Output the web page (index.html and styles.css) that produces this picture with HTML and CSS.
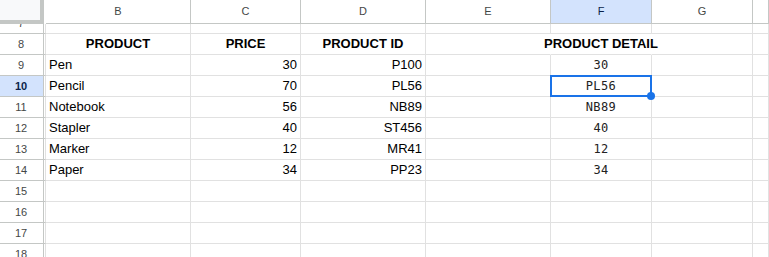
FILE: index.html
```html
<!DOCTYPE html>
<html lang="en">
<head>
  <meta charset="UTF-8" />
  <title>Products - Sheet</title>
  <link rel="stylesheet" href="styles.css">
</head>
<body>

  <div class="sheet">
    <!-- column letters -->
    <div class="row col-head">
      <div class="corner"></div>
      <div class="ch">B</div>
      <div class="ch">C</div>
      <div class="ch">D</div>
      <div class="ch">E</div>
      <div class="ch active">F</div>
      <div class="ch">G</div>
      <div class="ch"></div>
    </div>

    <div class="viewport">
      <div class="row first">
        <div class="rh">7</div>
        <div class="c"></div><div class="c"></div><div class="c"></div><div class="c"></div><div class="c"></div><div class="c"></div><div class="c"></div>
      </div>

      <div class="row">
        <div class="rh">8</div>
        <div class="c title">PRODUCT</div>
        <div class="c title">PRICE</div>
        <div class="c title">PRODUCT ID</div>
        <div class="c no-line"></div>
        <div class="c title no-line">PRODUCT DETAIL</div>
        <div class="c"></div>
        <div class="c"></div>
      </div>

      <div class="row">
        <div class="rh">9</div>
        <div class="c">Pen</div>
        <div class="c num">30</div>
        <div class="c num">P100</div>
        <div class="c"></div>
        <div class="c mono">30</div>
        <div class="c"></div>
        <div class="c"></div>
      </div>

      <div class="row">
        <div class="rh active">10</div>
        <div class="c">Pencil</div>
        <div class="c num">70</div>
        <div class="c num">PL56</div>
        <div class="c"></div>
        <div class="c mono selected">PL56</div>
        <div class="c"></div>
        <div class="c"></div>
      </div>

      <div class="row">
        <div class="rh">11</div>
        <div class="c">Notebook</div>
        <div class="c num">56</div>
        <div class="c num">NB89</div>
        <div class="c"></div>
        <div class="c mono">NB89</div>
        <div class="c"></div>
        <div class="c"></div>
      </div>

      <div class="row">
        <div class="rh">12</div>
        <div class="c">Stapler</div>
        <div class="c num">40</div>
        <div class="c num">ST456</div>
        <div class="c"></div>
        <div class="c mono">40</div>
        <div class="c"></div>
        <div class="c"></div>
      </div>

      <div class="row">
        <div class="rh">13</div>
        <div class="c">Marker</div>
        <div class="c num">12</div>
        <div class="c num">MR41</div>
        <div class="c"></div>
        <div class="c mono">12</div>
        <div class="c"></div>
        <div class="c"></div>
      </div>

      <div class="row">
        <div class="rh">14</div>
        <div class="c">Paper</div>
        <div class="c num">34</div>
        <div class="c num">PP23</div>
        <div class="c"></div>
        <div class="c mono">34</div>
        <div class="c"></div>
        <div class="c"></div>
      </div>

      <div class="row">
        <div class="rh">15</div>
        <div class="c"></div><div class="c"></div><div class="c"></div><div class="c"></div><div class="c"></div><div class="c"></div><div class="c"></div>
      </div>
      <div class="row">
        <div class="rh">16</div>
        <div class="c"></div><div class="c"></div><div class="c"></div><div class="c"></div><div class="c"></div><div class="c"></div><div class="c"></div>
      </div>
      <div class="row">
        <div class="rh">17</div>
        <div class="c"></div><div class="c"></div><div class="c"></div><div class="c"></div><div class="c"></div><div class="c"></div><div class="c"></div>
      </div>
      <div class="row">
        <div class="rh">18</div>
        <div class="c"></div><div class="c"></div><div class="c"></div><div class="c"></div><div class="c"></div><div class="c"></div><div class="c"></div>
      </div>
    </div>
  </div>

</body>
</html>
```

FILE: styles.css
```css
* {
  box-sizing: border-box;
}

body {
  margin: 0;
  background: #fff;
  font-family: "Liberation Sans", Arial, sans-serif;
  color: #000;
  overflow: hidden;
}

.sheet {
  width: 769px;
  height: 257px;
  overflow: hidden;
}

.row {
  display: grid;
  grid-template-columns: 46px 145px 110px 125px 125px 101px 101px 1fr;
  height: 21px;
}

/* column letters */
.col-head {
  height: 24px;
}

.corner {
  background: #f8f9fa;
  border-right: 4px solid #c4c7c5;
  border-bottom: 4px solid #c4c7c5;
  margin-right: 2px;
}

.ch {
  border-right: 1px solid #c4c7c5;
  border-bottom: 1px solid #c4c7c5;
  font-size: 11px;
  color: #444746;
  display: flex;
  align-items: center;
  justify-content: center;
  padding-bottom: 1px;
}

.ch.active {
  background: #d3e3fd;
  color: #0b1f4a;
}

.viewport {
  height: 233px;
  overflow: hidden;
}

.first {
  margin-top: -11px;
}

/* row numbers */
.rh {
  border-right: 1px solid #e1e1e1;
  border-bottom: 1px solid #c4c7c5;
  box-shadow: inset -1px 0 #fff, inset -2px 0 #c4c7c5;
  font-size: 11px;
  line-height: 20px;
  color: #444746;
  text-align: center;
  padding-right: 3px;
}

.rh.active {
  background: #d3e3fd;
  color: #0b1f4a;
  font-weight: bold;
}

/* cells */
.c {
  border-right: 1px solid #e1e1e1;
  border-bottom: 1px solid #e1e1e1;
  font-size: 13px;
  line-height: 20px;
  padding: 0 3px;
  white-space: nowrap;
}

.c.num {
  text-align: right;
}

.c.title {
  font-weight: bold;
  display: flex;
  justify-content: center;
}

.c.no-line {
  border-right-color: transparent;
}

.c.mono {
  font-family: "DejaVu Sans Mono", "Liberation Mono", monospace;
  font-size: 12px;
  letter-spacing: 0.4px;
  color: #222;
  text-align: center;
}

.c.selected {
  position: relative;
}

.c.selected::after {
  content: "";
  position: absolute;
  top: -1px;
  left: -1px;
  right: -1px;
  bottom: -1px;
  border: 2px solid #1a73e8;
}

.c.selected::before {
  content: "";
  position: absolute;
  right: -4px;
  bottom: -4px;
  width: 8px;
  height: 8px;
  border-radius: 50%;
  background: #1a73e8;
  z-index: 2;
}
```
